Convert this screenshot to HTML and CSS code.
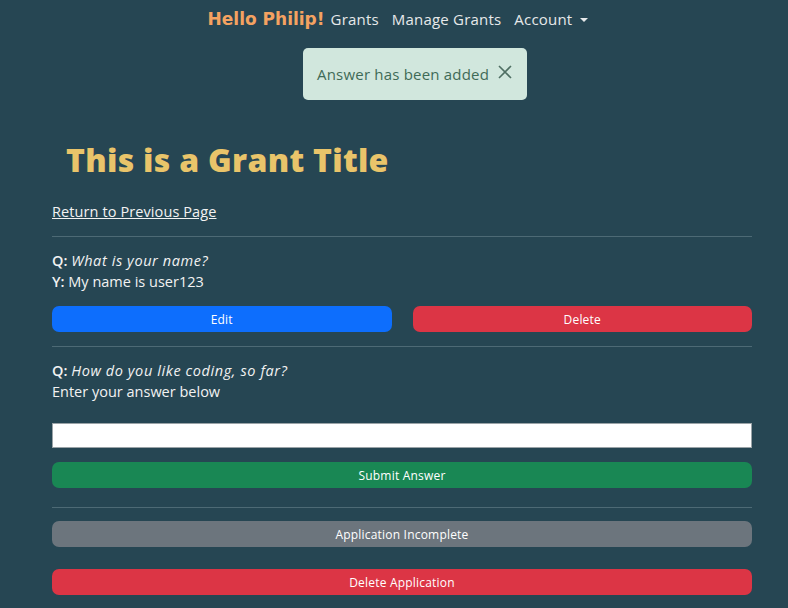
FILE: index.html
```html
<!DOCTYPE html>
<html>
<head>
<meta charset="utf-8">
<link rel="stylesheet" href="styles.css">
</head>
<body>
<nav class="nav">
  <span class="brand">Hello Philip!</span>
  <a class="nav-link">Grants</a>
  <a class="nav-link">Manage Grants</a>
  <a class="nav-link dropdown">Account <span class="caret"></span></a>
</nav>
<div class="alert-wrap">
  <div class="alert">
    <span>Answer has been added</span>
    <svg class="close" width="16" height="16" viewBox="0 0 16 16"><path d="M2 2L14 14M14 2L2 14" stroke="#4f6f63" stroke-width="1.6" fill="none"/></svg>
  </div>
</div>
<main class="container">
  <h1 class="title">This is a Grant Title</h1>
  <a class="back">Return to Previous Page</a>
  <hr class="rule">
  <p class="line"><span class="lbl">Q:</span> <em>What is your name?</em></p>
  <p class="line"><span class="lbl">Y:</span> My name is user123</p>
  <div class="btn-row">
    <button class="btn btn-primary">Edit</button>
    <button class="btn btn-danger">Delete</button>
  </div>
  <hr class="rule">
  <p class="line"><span class="lbl">Q:</span> <em>How do you like coding, so far?</em></p>
  <p class="line">Enter your answer below</p>
  <input class="answer" type="text">
  <button class="btn btn-success full">Submit Answer</button>
  <hr class="rule rule-b">
  <button class="btn btn-secondary full">Application Incomplete</button>
  <button class="btn btn-danger full del-app">Delete Application</button>
</main>
</body>
</html>
```
FILE: styles.css
```css
html, body {
  margin: 0;
  padding: 0;
  background: #264653;
  font-family: "Open Sans", "Noto Sans", sans-serif;
  color: #f2f2f2;
  height: 100%;
  overflow: hidden;
}
.nav {
  display: flex;
  justify-content: center;
  align-items: center;
  height: 37px;
  padding-left: 8px;
  gap: 13px;
}
.brand {
  font-family: "DejaVu Sans", sans-serif;
  font-weight: 700;
  font-size: 17px;
  color: #f4a261;
  margin-right: -7px;
}
.nav-link {
  font-size: 15px;
  color: #e6e9ea;
  letter-spacing: 0.2px;
}
.caret {
  display: inline-block;
  width: 0;
  height: 0;
  border-left: 4px solid transparent;
  border-right: 4px solid transparent;
  border-top: 4px solid #e6e9ea;
  vertical-align: 3px;
  margin-left: 4px;
}
.alert-wrap {
  display: flex;
  padding-left: 303px;
  margin-top: 11px;
}
.alert {
  width: 224px;
  height: 52px;
  box-sizing: border-box;
  background: #d1e7dd;
  border-radius: 5px;
  display: flex;
  align-items: center;
  padding-left: 14px;
  color: #3f6b57;
  font-size: 15px;
  letter-spacing: 0.2px;
}
.close {
  margin-left: 8px;
  margin-top: -4px;
}
.container {
  width: 700px;
  margin-left: 52px;
}
.title {
  margin: 38px 0 0 14px;
  font-family: "Open Sans", sans-serif;
  font-weight: 800;
  font-size: 32px;
  line-height: 44px;
  color: #e9c46a;
  letter-spacing: 0.3px;
}
.back {
  display: inline-block;
  margin-top: 20px;
  font-size: 14.5px;
  line-height: 20px;
  color: #f2f2f2;
  text-decoration: underline;
  letter-spacing: 0.1px;
}
.rule {
  border: 0;
  border-top: 1px solid #4d6a75;
  margin: 14px 0 13px;
}
.line {
  margin: 0;
  font-size: 14.5px;
  line-height: 21px;
}
.line em {
  letter-spacing: 0.6px;
}
.lbl {
  font-weight: 600;
}
.btn-row {
  display: flex;
  gap: 21px;
  margin-top: 14px;
}
.btn {
  flex: 1;
  height: 26px;
  border: 0;
  border-radius: 7px;
  color: #fff;
  font-family: "Open Sans", sans-serif;
  font-size: 12px;
  font-weight: 500;
  letter-spacing: 0.2px;
  padding: 0;
}
.full {
  display: block;
  width: 100%;
}
.btn-primary { background: #0d6efd; }
.btn-danger { background: #dc3545; }
.btn-success { background: #198754; margin-top: 14px; }
.btn-secondary { background: #6c757d; }
.del-app { margin-top: 22px; }
.answer {
  display: block;
  box-sizing: border-box;
  width: 100%;
  height: 25px;
  margin-top: 21px;
  border: 1px solid #9aa3a7;
  background: #fff;
}
.rule-b { margin: 19px 0 13px; }
```
